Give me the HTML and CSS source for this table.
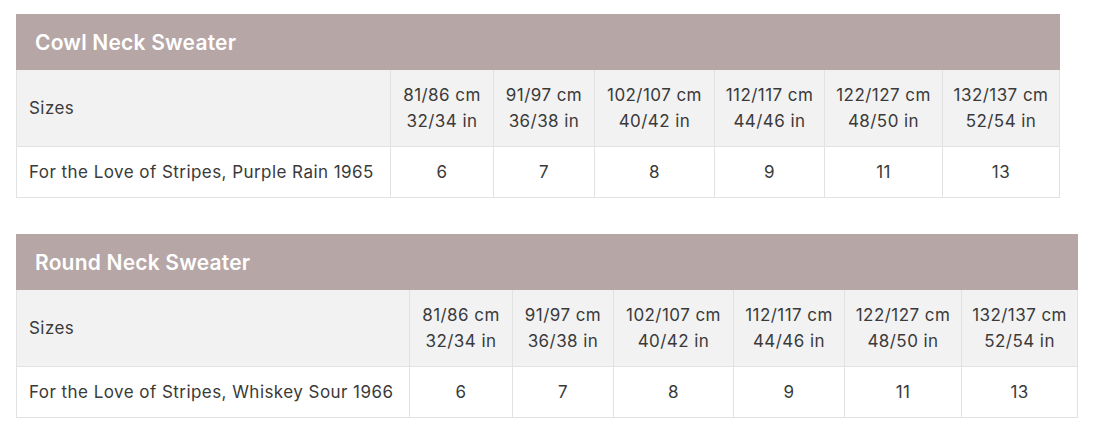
FILE: index.html
```html
<!DOCTYPE html>
<html>
<head>
<meta charset="utf-8">
<link rel="stylesheet" href="styles.css">
</head>
<body>
<table class="size-table t1">
  <colgroup>
    <col class="c-label1"><col class="c1"><col class="c2"><col class="c3"><col class="c4a"><col class="c5a"><col class="c6a">
  </colgroup>
  <thead>
    <tr><th class="title" colspan="7">Cowl Neck Sweater</th></tr>
  </thead>
  <tbody>
    <tr class="sizes">
      <td class="label">Sizes</td>
      <td>81/86 cm<br>32/34 in</td>
      <td>91/97 cm<br>36/38 in</td>
      <td>102/107 cm<br>40/42 in</td>
      <td>112/117 cm<br>44/46 in</td>
      <td>122/127 cm<br>48/50 in</td>
      <td>132/137 cm<br>52/54 in</td>
    </tr>
    <tr class="data">
      <td class="label">For the Love of Stripes, Purple Rain 1965</td>
      <td>6</td><td>7</td><td>8</td><td>9</td><td>11</td><td>13</td>
    </tr>
  </tbody>
</table>

<table class="size-table t2">
  <colgroup>
    <col class="c-label2"><col class="c1"><col class="c2"><col class="c3"><col class="c4b"><col class="c5b"><col class="c6b">
  </colgroup>
  <thead>
    <tr><th class="title" colspan="7">Round Neck Sweater</th></tr>
  </thead>
  <tbody>
    <tr class="sizes">
      <td class="label">Sizes</td>
      <td>81/86 cm<br>32/34 in</td>
      <td>91/97 cm<br>36/38 in</td>
      <td>102/107 cm<br>40/42 in</td>
      <td>112/117 cm<br>44/46 in</td>
      <td>122/127 cm<br>48/50 in</td>
      <td>132/137 cm<br>52/54 in</td>
    </tr>
    <tr class="data">
      <td class="label">For the Love of Stripes, Whiskey Sour 1966</td>
      <td>6</td><td>7</td><td>8</td><td>9</td><td>11</td><td>13</td>
    </tr>
  </tbody>
</table>
</body>
</html>
```

FILE: styles.css
```css
html, body {
  margin: 0;
  padding: 0;
  background: #ffffff;
}
body {
  padding: 14px 0 0 16px;
  font-family: "Inter", "DejaVu Sans", sans-serif;
  color: #3a3a3a;
}
.size-table {
  border-collapse: collapse;
  table-layout: fixed;
  border: 1px solid #e2e2e2;
}
.t1 { width: 1043px; }
.t2 { width: 1061px; margin-top: 36px; }
.c-label1 { width: 374px; }
.c-label2 { width: 393px; }
.c1 { width: 103px; }
.c2 { width: 101px; }
.c3 { width: 120px; }
.c4a { width: 110px; }
.c5a { width: 118px; }
.c6a { width: 117px; }
.c4b { width: 111px; }
.c5b { width: 117px; }
.c6b { width: 116px; }
.title {
  background: #b6a6a6;
  color: #ffffff;
  text-align: left;
  font-weight: 600;
  font-size: 21px;
  letter-spacing: 0.2px;
  height: 55px;
  padding: 0 0 0 18px;
  box-sizing: border-box;
  border: 1px solid #b6a6a6;
}
.size-table td {
  border: 1px solid #e2e2e2;
  text-align: center;
  vertical-align: middle;
  font-size: 17px;
  letter-spacing: 0.45px;
  line-height: 26px;
  padding: 0;
}
.size-table td.label {
  text-align: left;
  padding-left: 12px;
}
.sizes td {
  background: #f2f2f2;
  height: 76px;
}
.data td {
  background: #ffffff;
  height: 50px;
}
```
